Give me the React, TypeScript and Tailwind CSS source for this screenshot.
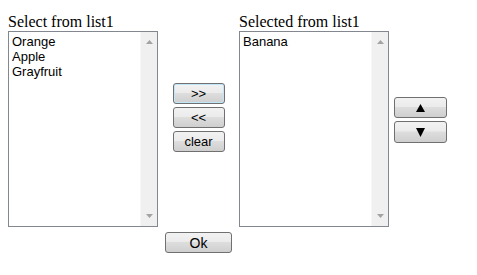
import React from 'react';

const btn =
  'flex items-center justify-center rounded-[3px] border border-[#707070] bg-[linear-gradient(#f2f2f2_0%,#ebebeb_45%,#dddddd_50%,#cfcfcf_100%)] text-[13px] leading-none text-black font-["Liberation_Sans",Arial,sans-serif]';

const ListBox: React.FC<{ items: string[] }> = ({ items }) => (
  <div className="flex h-[196px] w-[150px] border border-[#828790] bg-white">
    <div className="flex-1 pl-[3px] pt-[2px] font-['Liberation_Sans',Arial,sans-serif] text-[13px] leading-[15px] text-black">
      {items.map((it) => (
        <div key={it}>{it}</div>
      ))}
    </div>
    <div className="flex w-[17px] flex-col items-center justify-between border-l border-[#f7f7f7] bg-[#f0f0f0] py-[8px]">
      <svg width="7" height="4" viewBox="0 0 7 4">
        <path d="M0 4 L3.5 0 L7 4 Z" fill="#a3a3a3" />
      </svg>
      <svg width="7" height="4" viewBox="0 0 7 4">
        <path d="M0 0 L7 0 L3.5 4 Z" fill="#a3a3a3" />
      </svg>
    </div>
  </div>
);

export default function App() {
  return (
    <div className="h-[275px] w-[477px] bg-white pl-[8px] pt-[13px] font-['Liberation_Serif','Times_New_Roman',serif] text-black">
      <div className="flex items-center">
        <div className="flex flex-col">
          <div className="h-[18px] text-[16px] leading-[18px]">Select from list1</div>
          <ListBox items={['Orange', 'Apple', 'Grayfruit']} />
        </div>
        <div className="mx-[7px] flex w-[67px] flex-col items-center gap-[3px] pb-[6px]">
          <button className={`${btn} h-[21px] w-[52px] border-[#3c7fb1] shadow-[inset_0_0_0_1px_#bfe6f9]`}>&gt;&gt;</button>
          <button className={`${btn} h-[21px] w-[52px]`}>&lt;&lt;</button>
          <button className={`${btn} h-[21px] w-[52px]`}>clear</button>
        </div>
        <div className="flex flex-col">
          <div className="h-[18px] text-[16px] leading-[18px]">Selected from list1</div>
          <ListBox items={['Banana']} />
        </div>
        <div className="ml-[5px] flex flex-col gap-[3px]">
          <button className={`${btn} h-[21px] w-[53px]`}>
            <svg width="9" height="8" viewBox="0 0 9 8">
              <path d="M0 8 L4.5 0 L9 8 Z" fill="#000" />
            </svg>
          </button>
          <button className={`${btn} h-[22px] w-[53px]`}>
            <svg width="9" height="9" viewBox="0 0 9 9">
              <path d="M0 0 L9 0 L4.5 9 Z" fill="#000" />
            </svg>
          </button>
        </div>
      </div>
      <div className="mt-[5px] pl-[157px]">
        <button className={`${btn} h-[21px] w-[67px] text-[14px]`}>Ok</button>
      </div>
    </div>
  );
}
